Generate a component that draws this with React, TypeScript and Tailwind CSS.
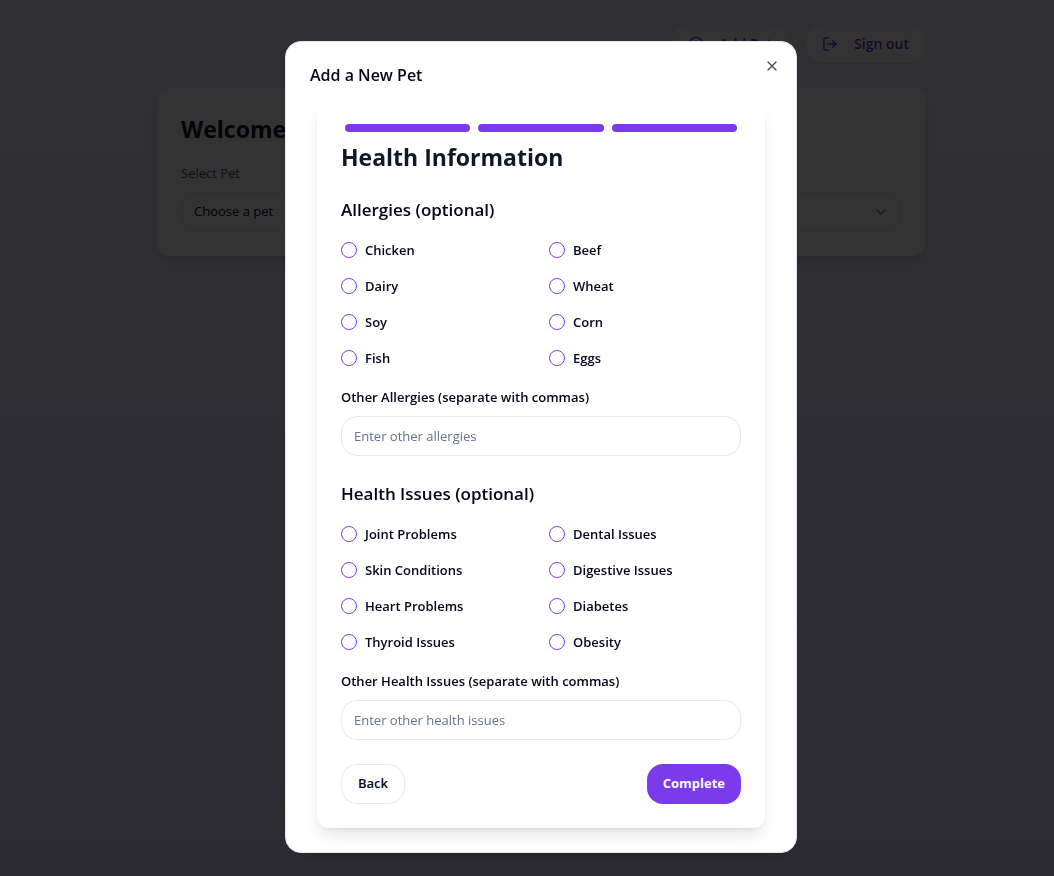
import { useState } from 'react';
import { ChevronDown, CirclePlus, LogOut, X } from 'lucide-react';

const allergies = ['Chicken', 'Beef', 'Dairy', 'Wheat', 'Soy', 'Corn', 'Fish', 'Eggs'];

const healthIssues = [
  'Joint Problems',
  'Dental Issues',
  'Skin Conditions',
  'Digestive Issues',
  'Heart Problems',
  'Diabetes',
  'Thyroid Issues',
  'Obesity',
];

function Dashboard() {
  return (
    <div className="min-h-screen bg-gradient-to-b from-[#f0edfa] to-[#ddd6fe] pt-[25px] pl-7">
      <div className="mx-auto max-w-3xl">
        <header className="flex justify-end gap-[18px]">
          <button type="button" className="flex h-[38px] items-center gap-4 rounded-2xl bg-white px-4 text-sm font-semibold text-[#6d28d9] shadow-xs">
            <CirclePlus className="size-4" />
            Add Pet
          </button>
          <button type="button" className="flex h-[38px] items-center gap-4 rounded-2xl bg-white px-4 text-sm font-semibold text-[#6d28d9] shadow-xs">
            <LogOut className="size-4" />
            Sign out
          </button>
        </header>
        <main className="mt-[25px] rounded-xl bg-white p-6 shadow-lg">
          <h1 className="text-[23px] leading-[34px] font-bold text-slate-900">Welcome</h1>
          <label htmlFor="pet" className="mt-[17px] block text-[13px] leading-5 text-slate-600">
            Select Pet
          </label>
          <div className="relative mt-[9px]">
            <select id="pet" className="h-10 w-full appearance-none rounded-2xl border border-slate-200 bg-white px-3 text-[13px] text-slate-950">
              <option>Choose a pet</option>
            </select>
            <ChevronDown className="pointer-events-none absolute top-3 right-3 size-4 text-slate-950 opacity-50" />
          </div>
        </main>
      </div>
    </div>
  );
}

function CheckGroup({ title, name, options }: { title: string; name: string; options: string[] }) {
  const [selected, setSelected] = useState<string[]>([]);

  const toggle = (option: string) => {
    setSelected((prev) => (prev.includes(option) ? prev.filter((o) => o !== option) : [...prev, option]));
  };

  return (
    <fieldset>
      <legend className="text-[17px] leading-7 font-semibold">{title}</legend>
      <div className="mt-4 grid grid-cols-2 gap-4">
        {options.map((option) => (
          <label key={option} className="flex items-center gap-2 text-[13px] leading-5 font-semibold">
            <input
              type="checkbox"
              name={name}
              checked={selected.includes(option)}
              onChange={() => toggle(option)}
              className="size-4 shrink-0 appearance-none rounded-full border border-[#7c3aed] checked:bg-[#7c3aed]"
            />
            {option}
          </label>
        ))}
      </div>
    </fieldset>
  );
}

function TextField({ id, label, placeholder }: { id: string; label: string; placeholder: string }) {
  return (
    <div className="mt-[19px]">
      <label htmlFor={id} className="block text-[13px] leading-5 font-semibold">
        {label}
      </label>
      <input
        id={id}
        type="text"
        placeholder={placeholder}
        className="mt-[9px] h-10 w-full rounded-2xl border border-slate-200 bg-white px-3 text-[13px] placeholder:text-slate-500"
      />
    </div>
  );
}

function AddPetDialog({ onClose }: { onClose: () => void }) {
  return (
    <div className="fixed inset-0 flex overflow-y-auto bg-black/80 pt-[18px] pl-7">
      <div
        role="dialog"
        aria-modal="true"
        aria-labelledby="dialog-title"
        className="relative m-auto w-full max-w-lg rounded-2xl border border-slate-200 bg-white p-6 text-slate-950 shadow-lg"
      >
        <h2 id="dialog-title" className="text-base leading-[18px] font-semibold">
          Add a New Pet
        </h2>
        <button type="button" aria-label="Close" onClick={onClose} className="absolute top-4 right-4 opacity-70">
          <X className="size-4" />
        </button>
        <form className="mx-auto mt-4 max-w-md rounded-xl bg-white p-6 shadow-lg" onSubmit={(e) => e.preventDefault()}>
          <div className="flex">
            {[1, 2, 3].map((step) => (
              <div key={step} className="mx-1 h-2 flex-1 rounded-full bg-[#7c3aed]" />
            ))}
          </div>
          <h3 className="mt-[9px] text-[23px] leading-8 font-bold text-slate-900">Health Information</h3>
          <div className="mt-[23px]">
            <CheckGroup title="Allergies (optional)" name="allergies" options={allergies} />
            <TextField id="other-allergies" label="Other Allergies (separate with commas)" placeholder="Enter other allergies" />
          </div>
          <div className="mt-6">
            <CheckGroup title="Health Issues (optional)" name="health-issues" options={healthIssues} />
            <TextField id="other-issues" label="Other Health Issues (separate with commas)" placeholder="Enter other health issues" />
          </div>
          <div className="mt-6 flex justify-between">
            <button type="button" className="h-10 rounded-2xl border border-slate-200 bg-white px-4 text-[13px] font-semibold">
              Back
            </button>
            <button type="submit" className="h-10 rounded-2xl bg-[#7c3aed] px-4 text-[13px] font-bold text-slate-50">
              Complete
            </button>
          </div>
        </form>
      </div>
    </div>
  );
}

export default function App() {
  const [open, setOpen] = useState(true);

  return (
    <div className="font-['Open_Sans','Noto_Sans',sans-serif]">
      <Dashboard />
      {open && <AddPetDialog onClose={() => setOpen(false)} />}
    </div>
  );
}
